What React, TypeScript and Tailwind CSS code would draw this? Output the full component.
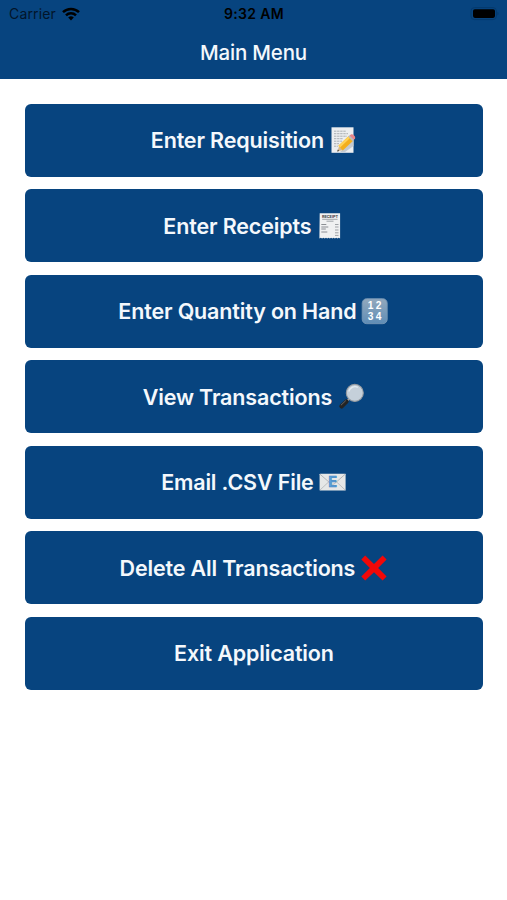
import React from 'react';

const MemoIcon = () => (
  <svg viewBox="0 0 28 28" className="h-7 w-7 shrink-0">
    <rect x="2.5" y="1.3" width="22" height="25.5" fill="#eceef0" />
    <path
      d="M5 5.2h12M5 7.7h14M5 10.2h13M5 12.7h9M5 15.2h8M5 17.7h5M5 20.2h4"
      stroke="#a3a8ad"
      strokeWidth="0.9"
      strokeDasharray="2.4 0.7"
    />
    <path d="M11 26 24.5 14v6l-8.5 6z" fill="#c3c9d0" />
    <path d="m8.2 25.6 2-5.6 3.6 4z" fill="#d9b98a" />
    <path d="m8.2 25.6.7-2 1.2 1.4z" fill="#333" />
    <path d="M9.4 19.8 20 9.8l4.4 4.6L13.8 24.4z" fill="#f3ae1c" />
    <path d="M9.4 19.8 20 9.8l1.6 1.7L11.1 21.5z" fill="#ffd257" />
    <path d="m19.2 10.6 1.9-1.7 4.2 4.6-1.9 1.7z" fill="#b9bcc0" />
    <path d="m20.6 9.4 1.3-1c1.6-.9 5 2 4.2 3.8l-1.3 1.6z" fill="#e5858c" />
  </svg>
);

const ReceiptIcon = () => (
  <svg viewBox="0 0 28 28" className="h-7 w-7 shrink-0">
    <path
      d="M3.7 1.3h20.4v25.2l-1.3-.7-1.3.7-1.3-.7-1.3.7-1.3-.7-1.2.7-1.3-.7-1.3.7-1.3-.7-1.3.7-1.2-.7-1.3.7-1.3-.7-1.3.7-1.3-.7-1.4.7z"
      fill="#f0f1f2"
    />
    <text
      x="13.9"
      y="5.8"
      textAnchor="middle"
      textLength="16"
      fontSize="3.9"
      fontWeight="700"
      fill="#3d4247"
      className="font-['Inter',sans-serif]"
    >
      RECEIPT
    </text>
    <path d="M6.2 7.3h15.4M10.5 9.2h7" stroke="#8b9095" strokeWidth="0.8" />
    <path d="M5.3 12.5h5M5.3 15h7M5.3 17h4.5M5.3 20h6" stroke="#80858a" strokeWidth="0.9" />
    <path d="M19 12.5h3.5M19 15h3.5M19 18h3.5M19 20.8h3.5M19 23.4h3.5" stroke="#969b9f" strokeWidth="0.9" />
  </svg>
);

const NumbersIcon = () => (
  <svg viewBox="0 0 28 28" className="h-7 w-7 shrink-0">
    <defs>
      <linearGradient id="key" x1="0" y1="0" x2="0" y2="1">
        <stop offset="0" stopColor="#93a9bd" />
        <stop offset="1" stopColor="#5f8db6" />
      </linearGradient>
    </defs>
    <rect x="1.2" y="1.7" width="25" height="25" rx="4.5" fill="url(#key)" stroke="#7596b5" strokeWidth="0.9" />
    <g
      fill="#fff"
      fontSize="10.2"
      fontWeight="700"
      textAnchor="middle"
      className="font-['Liberation_Sans',sans-serif]"
    >
      <text x="9.6" y="12.2">1</text>
      <text x="17.6" y="12.2">2</text>
      <text x="9.6" y="23.2">3</text>
      <text x="17.6" y="23.2">4</text>
    </g>
  </svg>
);

const MagnifierIcon = () => (
  <svg viewBox="0 0 28 28" className="h-7 w-7 shrink-0">
    <path d="m12 16-3 3" stroke="#a7a9ab" strokeWidth="2" />
    <path d="m9.5 18.5-5 4.8" stroke="#242424" strokeWidth="4.4" strokeLinecap="round" />
    <path d="m8.6 17.8-4.4 4.2" stroke="#6b6b6b" strokeWidth="0.9" strokeLinecap="round" />
    <circle cx="17.8" cy="9.9" r="8.5" fill="#c5d0da" stroke="#969ba0" strokeWidth="1.1" />
    <path d="M11.8 8.5a6.4 6.4 0 0 1 9-4.2" stroke="#e4ebf0" strokeWidth="1.4" fill="none" />
  </svg>
);

const EmailIcon = () => (
  <svg viewBox="0 0 28 28" className="h-7 w-7 shrink-0">
    <rect x="0.6" y="5.7" width="26" height="16.8" rx="0.6" fill="#e6e7e7" />
    <path d="m1 22 9-8.4M26.2 22l-9-8.4" stroke="#b8bbbe" strokeWidth="0.9" />
    <path d="m1 6.2 10.6 9.3c1.2 1 2.9 1 4.1 0L26.2 6.2" fill="none" stroke="#b3b6b9" strokeWidth="1" />
    <text
      x="13.6"
      y="19.4"
      textAnchor="middle"
      fontSize="14.5"
      fontWeight="700"
      fill="#5aa0da"
      stroke="#3c82c0"
      strokeWidth="0.5"
      className="font-['Inter',sans-serif]"
    >
      E
    </text>
  </svg>
);

const CrossIcon = () => (
  <svg viewBox="0 0 28 28" className="h-7 w-7 shrink-0">
    <path
      d="M5.2 1.5 14 10l8.6-8.5 4 4-8.5 8.6 8.5 8.5-4 4L14 18.2l-8.8 8.4-3.9-4 8.6-8.5-8.6-8.6z"
      fill="#f20808"
    />
  </svg>
);

type MenuItem = {
  label: string;
  icon?: React.ReactNode;
};

const menuItems: MenuItem[] = [
  { label: 'Enter Requisition', icon: <MemoIcon /> },
  { label: 'Enter Receipts', icon: <ReceiptIcon /> },
  { label: 'Enter Quantity on Hand', icon: <NumbersIcon /> },
  { label: 'View Transactions', icon: <MagnifierIcon /> },
  { label: 'Email .CSV File', icon: <EmailIcon /> },
  { label: 'Delete All Transactions', icon: <CrossIcon /> },
  { label: 'Exit Application' },
];

const StatusBar = () => (
  <div className="grid h-[27px] grid-cols-3 items-center pr-[8px] pl-[9px] text-[14px] leading-none text-black">
    <div className="flex items-center gap-[6px]">
      <span className="tracking-[0.15px] text-[#02152a]">Carrier</span>
      <svg viewBox="0 0 18 14" className="h-[14px] w-[18px]">
        <g fill="none" stroke="#000" strokeWidth="2.5">
          <path d="M1 5.2a11.4 11.4 0 0 1 16 0" />
          <path d="M4 8.4a7.1 7.1 0 0 1 10 0" />
        </g>
        <path d="M6.2 10.6a4 4 0 0 1 5.6 0L9 13.5z" fill="#000" />
      </svg>
    </div>
    <span className="text-center font-semibold tracking-[0.35px] whitespace-nowrap">9:32 AM</span>
    <svg viewBox="0 0 30 14" className="h-[14px] w-[30px] justify-self-end">
      <rect x="2" y="0.6" width="25.4" height="12" rx="3.4" fill="none" stroke="#053a6d" strokeWidth="1" />
      <rect x="4" y="2.3" width="22" height="8.6" rx="1.8" fill="#000" />
      <path d="M28.4 4.8c1.5.5 1.5 3.2 0 3.7z" fill="#053a6d" />
    </svg>
  </div>
);

const App = () => {
  return (
    <div className="min-h-[900px] w-full bg-white font-['Inter',sans-serif]">
      <header className="h-[79px] bg-[#07447f]">
        <StatusBar />
        <h1 className="pt-[11px] text-center text-[20.5px] leading-[30px] font-medium tracking-[-0.2px] text-[#f4f8fc]">
          Main Menu
        </h1>
      </header>

      <main className="flex flex-col gap-[12.5px] pt-[24.7px] pr-[24.4px] pl-[25.2px]">
        {menuItems.map((item) => (
          <button
            key={item.label}
            type="button"
            className="flex h-[73px] items-center justify-center gap-[5px] rounded-[6px] bg-[#07447f] text-[21.5px] font-[560] tracking-[-0.15px] whitespace-nowrap text-[#f4f8fc]"
          >
            <span>{item.label}</span>
            {item.icon}
          </button>
        ))}
      </main>
    </div>
  );
};

export default App;
